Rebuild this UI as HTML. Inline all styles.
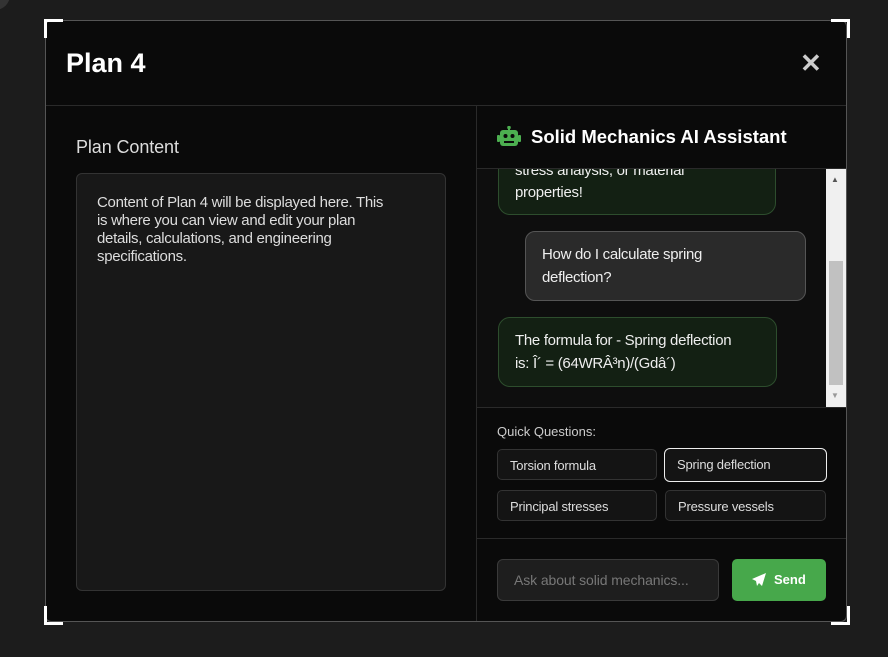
<!DOCTYPE html><html><head><style>
body{margin:0;width:888px;height:657px;background:#1c1c1c;font-family:"Liberation Sans",sans-serif;position:relative;overflow:hidden}
.m{position:absolute;left:45px;top:20px;width:800px;height:600px;border:1px solid #555;background:#0a0a0a;border-radius:6px;overflow:hidden}
.c{position:absolute;width:16px;height:16px;border-color:#fff;border-style:solid;border-width:0}
.abs{position:absolute}
.chip{position:absolute;height:31px;border:1px solid #333;border-radius:5px;background:#141414;color:#ddd;font-size:13px;letter-spacing:-0.2px;line-height:31px;box-sizing:border-box;padding-left:12px}
</style></head><body>
<div style="position:absolute;left:-20px;top:-20px;width:30px;height:30px;border-radius:50%;background:#333"></div>
<div class="m">
<div class="abs" style="left:20px;top:27px;font-size:27px;font-weight:bold;color:#fff">Plan 4</div>
<div class="abs" style="left:754px;top:27px;font-size:26px;color:#ccc;font-weight:bold">✕</div>
<div class="abs" style="left:0;top:84px;width:800px;height:1px;background:#2a2a2a"></div>
<div class="abs" style="left:430px;top:85px;width:1px;height:515px;background:#2a2a2a"></div>
<div class="abs" style="left:30px;top:116px;font-size:18px;color:#ddd;letter-spacing:-0.1px">Plan Content</div>
<div class="abs" style="left:30px;top:152px;width:370px;height:418px;box-sizing:border-box;border:1px solid #333;border-radius:6px;background:#181818;color:#ddd;font-size:15px;letter-spacing:-0.3px;line-height:18px;padding:20px">Content of Plan 4 will be displayed here. This<br>is where you can view and edit your plan<br>details, calculations, and engineering<br>specifications.</div>
<div class="abs" style="left:431px;top:85px;width:369px;height:62px;border-bottom:1px solid #2a2a2a"></div>
<svg class="abs" style="left:451px;top:105px" width="24" height="22" viewBox="0 0 24 22"><rect x="11" y="0" width="2" height="4" fill="#4caf50"/><circle cx="12" cy="1.5" r="1.8" fill="#4caf50"/><rect x="3" y="4" width="18" height="16" rx="3" fill="#4caf50"/><rect x="0" y="9" width="3" height="7" rx="1" fill="#4caf50"/><rect x="21" y="9" width="3" height="7" rx="1" fill="#4caf50"/><circle cx="8.5" cy="10" r="2" fill="#0a0a0a"/><circle cx="15.5" cy="10" r="2" fill="#0a0a0a"/><rect x="7" y="15" width="10" height="2" fill="#0a0a0a"/></svg>
<div class="abs" style="left:485px;top:105px;font-size:18.5px;font-weight:bold;color:#fff">Solid Mechanics AI Assistant</div>
<div class="abs" style="left:431px;top:148px;width:350px;height:239px;overflow:hidden;background:#0e0e0e">
 <div class="abs" style="left:21px;top:-60px;width:278px;height:106px;box-sizing:border-box;border:1px solid #2d4d2d;border-radius:12px;background:#132013;color:#eee;font-size:15px;letter-spacing:-0.3px;line-height:22px;padding:0 16px;padding-top:50px">stress analysis, or material<br>properties!</div>
 <div class="abs" style="left:48px;top:62px;width:281px;height:70px;box-sizing:border-box;border:1px solid #555;border-radius:10px;background:#2a2a2a;color:#eee;font-size:15px;letter-spacing:-0.3px;line-height:23px;padding:11px 16px">How do I calculate spring<br>deflection?</div>
 <div class="abs" style="left:21px;top:148px;width:279px;height:70px;box-sizing:border-box;border:1px solid #2d4d2d;border-radius:12px;background:#132013;color:#eee;font-size:15px;letter-spacing:-0.3px;line-height:23px;padding:11px 16px">The formula for - Spring deflection<br>is: Î´ = (64WRÂ³n)/(Gdâ´)</div>
</div>
<div class="abs" style="left:780px;top:148px;width:20px;height:239px;background:#f0f0f0"><div class="abs" style="left:3px;top:92px;width:14px;height:124px;background:#c1c1c1"></div><div class="abs" style="left:5px;top:6px;font-size:8px;color:#555">▲</div><div class="abs" style="left:5px;top:222px;font-size:8px;color:#999">▼</div></div>
<div class="abs" style="left:431px;top:386px;width:369px;height:1px;background:#2a2a2a"></div>
<div class="abs" style="left:451px;top:403px;font-size:13px;color:#ccc">Quick Questions:</div>
<div class="chip" style="left:451px;top:428px;width:160px">Torsion formula</div>
<div class="chip" style="left:618px;top:427px;width:163px;height:34px;border:1px solid #eee;border-radius:6px;line-height:32px">Spring deflection</div>
<div class="chip" style="left:451px;top:469px;width:160px">Principal stresses</div>
<div class="chip" style="left:619px;top:469px;width:161px">Pressure vessels</div>
<div class="abs" style="left:431px;top:517px;width:369px;height:1px;background:#2a2a2a"></div>
<div class="abs" style="left:451px;top:538px;width:222px;height:42px;box-sizing:border-box;border:1px solid #3a3a3a;border-radius:6px;background:#1e1e1e;color:#777;font-size:14px;letter-spacing:-0.1px;line-height:40px;padding-left:16px">Ask about solid mechanics...</div>
<div class="abs" style="left:686px;top:538px;width:94px;height:42px;border-radius:5px;background:#47a84b;color:#fff;font-size:13px;font-weight:bold;line-height:42px"><svg class="abs" style="left:20px;top:14px" width="14" height="14" viewBox="0 0 14 14"><path d="M14 0L0 6l4 2 1 5 2-3 3 3z" fill="#fff"/></svg><span class="abs" style="left:42px">Send</span></div>
</div>
<div class="c" style="left:44px;top:19px;border-top-width:3px;border-left-width:3px"></div>
<div class="c" style="left:831px;top:19px;border-top-width:3px;border-right-width:3px"></div>
<div class="c" style="left:44px;top:606px;border-bottom-width:3px;border-left-width:3px"></div>
<div class="c" style="left:831px;top:606px;border-bottom-width:3px;border-right-width:3px"></div>
</body></html>
